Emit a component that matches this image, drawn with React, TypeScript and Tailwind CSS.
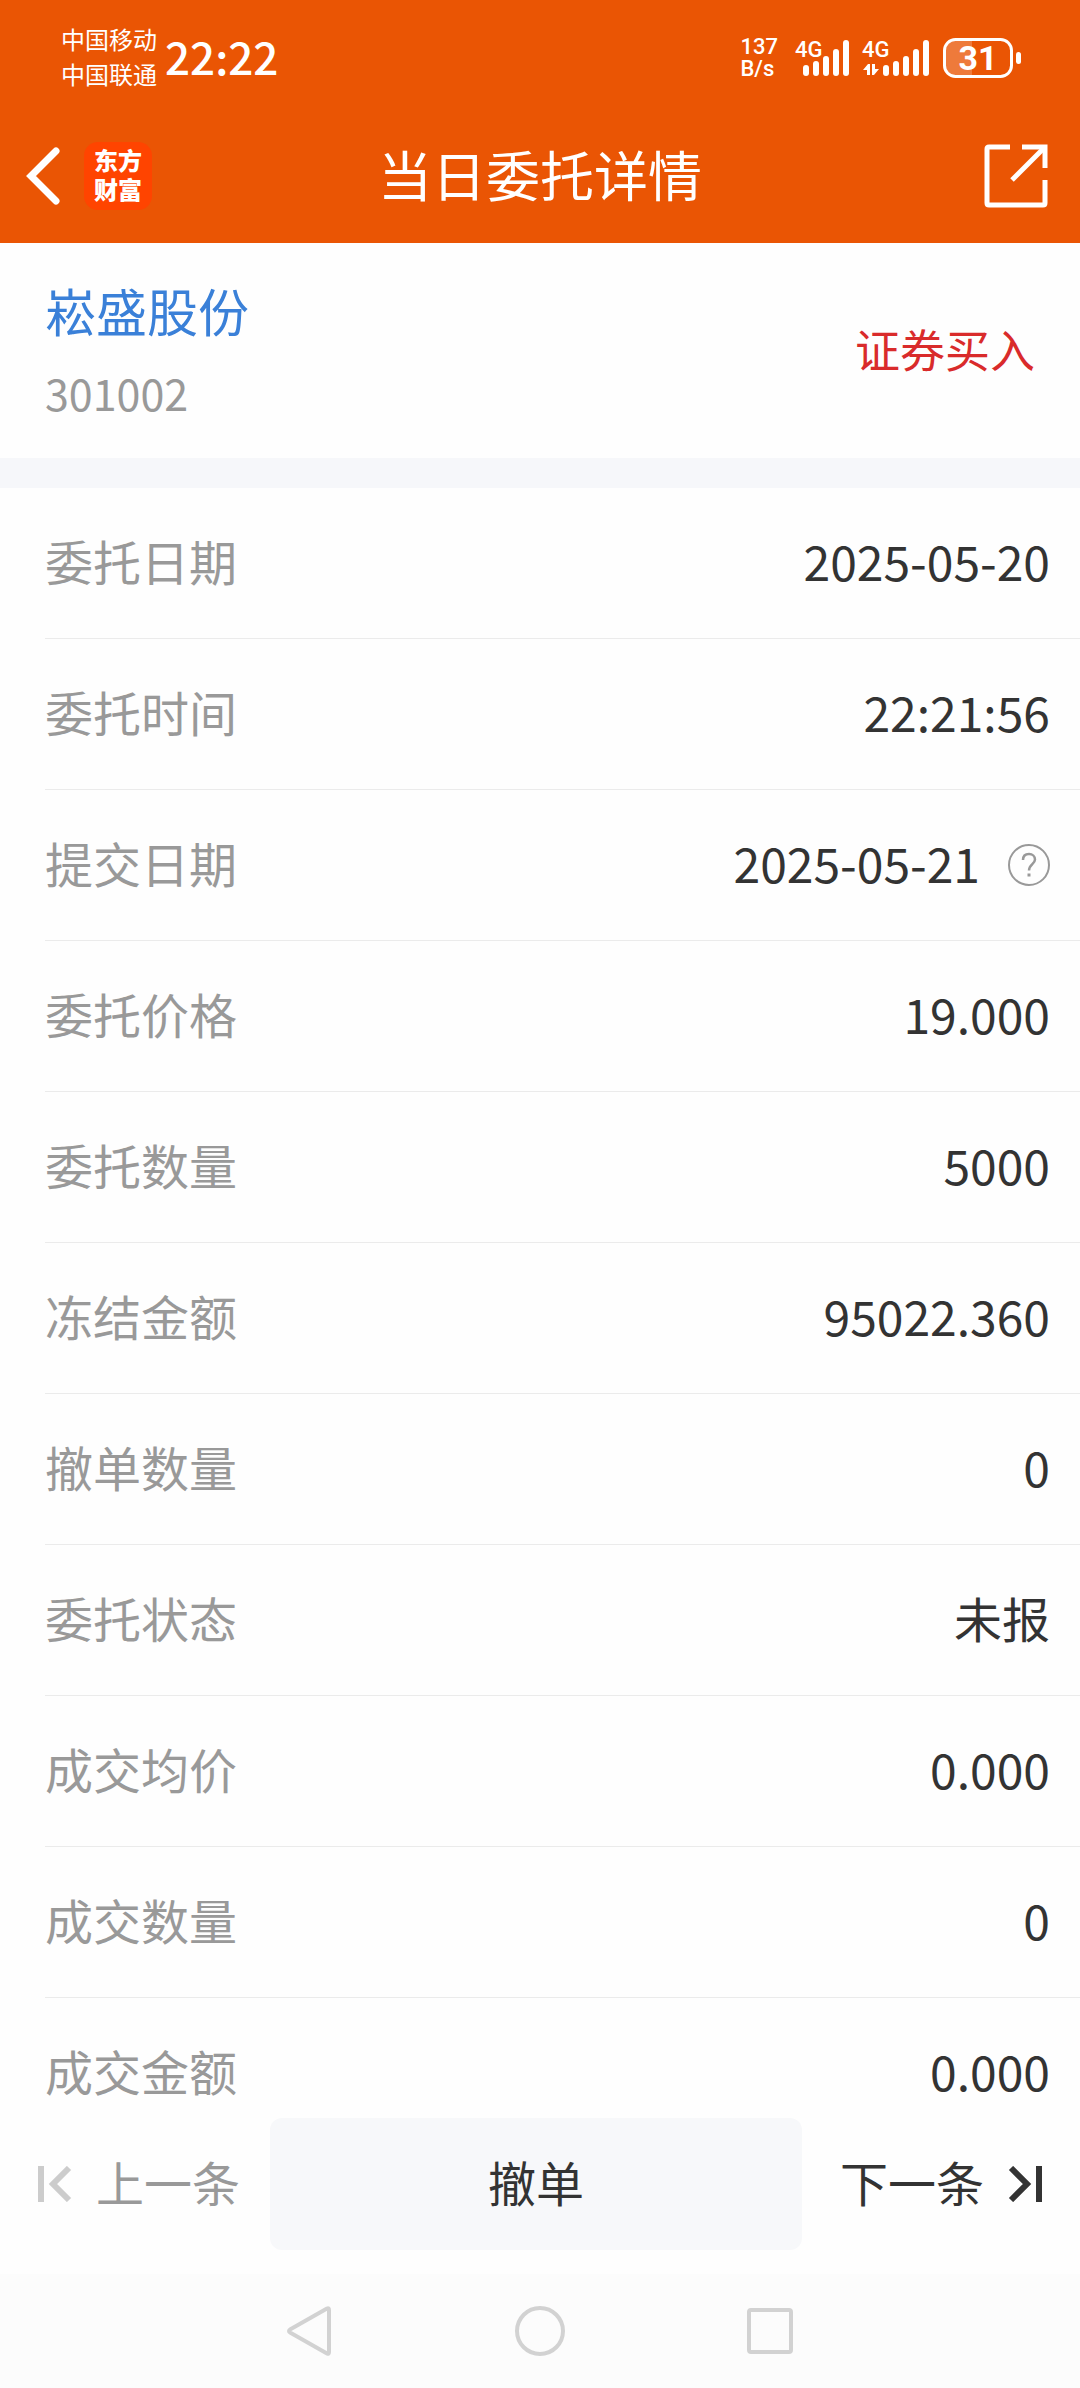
import React from 'react';

interface DetailRow {
  label: string;
  value: string;
  help?: boolean;
}

const rows: DetailRow[] = [
  { label: '委托日期', value: '2025-05-20' },
  { label: '委托时间', value: '22:21:56' },
  { label: '提交日期', value: '2025-05-21', help: true },
  { label: '委托价格', value: '19.000' },
  { label: '委托数量', value: '5000' },
  { label: '冻结金额', value: '95022.360' },
  { label: '撤单数量', value: '0' },
  { label: '委托状态', value: '未报' },
  { label: '成交均价', value: '0.000' },
  { label: '成交数量', value: '0' },
  { label: '成交金额', value: '0.000' },
];

// Top edge of each signal bar, shortest first
const barTops = [27, 23, 18, 11, 2];

function Signal({ offset, active }: { offset: number; active?: boolean }) {
  return (
    <svg
      width={offset + 46}
      height="40"
      viewBox={`0 0 ${offset + 46} 40`}
      fill="currentColor"
      className="overflow-visible"
      aria-hidden="true"
    >
      <text x="-1" y="19" fontSize="22" fontWeight="500">
        4G
      </text>
      {barTops.map((top, i) => (
        <rect key={top} x={offset + i * 10} y={top} width="6" height={38 - top} rx="3" />
      ))}
      {active && <path d="M0 32L5 26H7V37H4V32ZM9 26H12V31H16L11 37H9Z" />}
    </svg>
  );
}

function StatusBar() {
  return (
    <div className="flex h-[108px] items-center justify-between pt-2 pr-[59px] pl-[61px]">
      <div className="flex items-center gap-2 pb-1">
        <div className="text-[24px] leading-[35px]">
          <div>中国移动</div>
          <div>中国联通</div>
        </div>
        <span className="text-[44px] leading-[48px] font-medium">22:22</span>
      </div>
      <div className="flex items-center gap-[14px] font-[Roboto,sans-serif]">
        <div className="pr-1 text-[22px] leading-[22px] font-medium">
          <div>137</div>
          <div>B/s</div>
        </div>
        <Signal offset={7} />
        <Signal offset={20} active />
        <svg width="78" height="40" viewBox="0 0 78 40" className="overflow-visible" role="img" aria-label="31%">
          <path d="M12 3H29V37H12Q3 37 3 28V12Q3 3 12 3Z" fill="#fff" fillOpacity="0.22" />
          <rect x="1.5" y="1.5" width="67" height="37" rx="11" fill="none" stroke="currentColor" strokeWidth="3" />
          <rect x="73" y="14" width="5" height="12" rx="2.5" fill="currentColor" />
          <text x="35" y="32" fontSize="34" fontWeight="700" textAnchor="middle" fill="currentColor">
            31
          </text>
        </svg>
      </div>
    </div>
  );
}

function TitleBar() {
  return (
    <div className="grid h-[135px] grid-cols-[1fr_auto_1fr] items-center px-6">
      <div className="flex items-center gap-6">
        <button type="button" aria-label="返回">
          <svg width="36" height="60" viewBox="0 0 36 60" fill="none" stroke="currentColor" strokeWidth="7">
            <path d="M32 5L7 30L32 55" strokeLinecap="round" />
          </svg>
        </button>
        <div className="flex h-[68px] w-[68px] flex-col items-center justify-center rounded-[14px] bg-[#ff4400] pb-1 text-[24px] leading-[29px] font-black">
          <span>东方</span>
          <span>财富</span>
        </div>
      </div>
      <h1 className="pb-1 text-[54px] leading-[64px]">当日委托详情</h1>
      <button type="button" aria-label="分享" className="mr-2 justify-self-end">
        <svg width="64" height="64" viewBox="0 0 64 64" fill="none" stroke="currentColor" strokeWidth="5">
          <path d="M26 3H5Q3 3 3 5V59Q3 61 5 61H59Q61 61 61 59V36" />
          <path d="M38 3H61V24" />
          <path d="M61 3L28 36" />
        </svg>
      </button>
    </div>
  );
}

function HelpIcon() {
  return (
    <svg width="42" height="42" viewBox="0 0 42 42" fill="none" stroke="#999" strokeWidth="2">
      <circle cx="21" cy="21" r="20" />
      <path d="M15 16C15 12 17.500 10 21 10C24.500 10 27 12.500 27 15.500C27 20 21 20.500 21 26.500" strokeWidth="2.500" />
      <path d="M19.500 29.500H22.500V32.500H19.500Z" fill="#999" stroke="none" />
    </svg>
  );
}

function StepIcon({ next }: { next?: boolean }) {
  return (
    <svg width="36" height="36" viewBox="0 0 36 36" fill="none" stroke="currentColor" strokeWidth="6">
      {next ? <path d="M3 2L19 18L3 34M31 0V36" /> : <path d="M33 2L17 18L33 34M5 0V36" />}
    </svg>
  );
}

export default function App() {
  return (
    <div className="flex h-screen flex-col overflow-hidden bg-[#fefefe] font-['Noto_Sans_CJK_SC',sans-serif] text-[48px] leading-[64px] text-[#333]">
      <header className="shrink-0 bg-[#ea5504] text-white">
        <StatusBar />
        <TitleBar />
      </header>

      <main className="min-h-0 flex-1 overflow-y-auto [scrollbar-width:none]">
        <section className="flex h-[215px] items-center justify-between px-[45px]">
          <div>
            <a href="#stock" className="block text-[51px] leading-[82px] text-[#3a80d8]">
              崧盛股份
            </a>
            <div className="text-[43px] leading-[82px] text-[#999]">301002</div>
          </div>
          <span className="pb-1 text-[45px] text-[#d92b2b]">证券买入</span>
        </section>

        <div className="h-[30px] bg-[#f6f7fa]" />

        <dl>
          {rows.map((row) => (
            <div
              key={row.label}
              className="ml-[45px] flex h-[151px] items-center justify-between border-b border-[#ebebeb] pr-[30px]"
            >
              <dt className="pb-1.5 text-[#999]">{row.label}</dt>
              <dd className="flex items-center gap-7">
                <span className="pb-1.5">{row.value}</span>
                {row.help && (
                  <button type="button" aria-label="说明">
                    <HelpIcon />
                  </button>
                )}
              </dd>
            </div>
          ))}
        </dl>
      </main>

      <footer className="shrink-0">
        <div className="flex items-center pt-1 pb-6">
          <button type="button" className="flex w-[270px] items-center gap-6 pl-9 text-[#999]">
            <span className="text-[#ccc]">
              <StepIcon />
            </span>
            <span className="pb-1.5">上一条</span>
          </button>
          <button type="button" className="h-[132px] flex-1 rounded-xl bg-[#f7f8fa] pb-1.5">
            撤单
          </button>
          <button type="button" className="flex w-[278px] items-center justify-end gap-6 pr-9">
            <span className="pb-1.5">下一条</span>
            <StepIcon next />
          </button>
        </div>

        <nav className="flex h-[114px] items-center justify-center gap-[178px] bg-[#fcfcfc] text-[#d2d2d2]">
          <button type="button" aria-label="后退">
            <svg width="52" height="52" viewBox="0 0 52 52" fill="none" stroke="currentColor" strokeWidth="4" strokeLinejoin="round">
              <path d="M43 3.500Q45 2.500 45 5V47Q45 49.500 43 48.500L6 27.500Q4 26 6 24.500Z" />
            </svg>
          </button>
          <button type="button" aria-label="主页">
            <svg width="52" height="52" viewBox="0 0 52 52" fill="none" stroke="currentColor" strokeWidth="4">
              <circle cx="26" cy="26" r="23" />
            </svg>
          </button>
          <button type="button" aria-label="最近任务">
            <svg width="52" height="52" viewBox="0 0 52 52" fill="none" stroke="currentColor" strokeWidth="4">
              <rect x="5" y="5" width="42" height="42" rx="2" />
            </svg>
          </button>
        </nav>
      </footer>
    </div>
  );
}
